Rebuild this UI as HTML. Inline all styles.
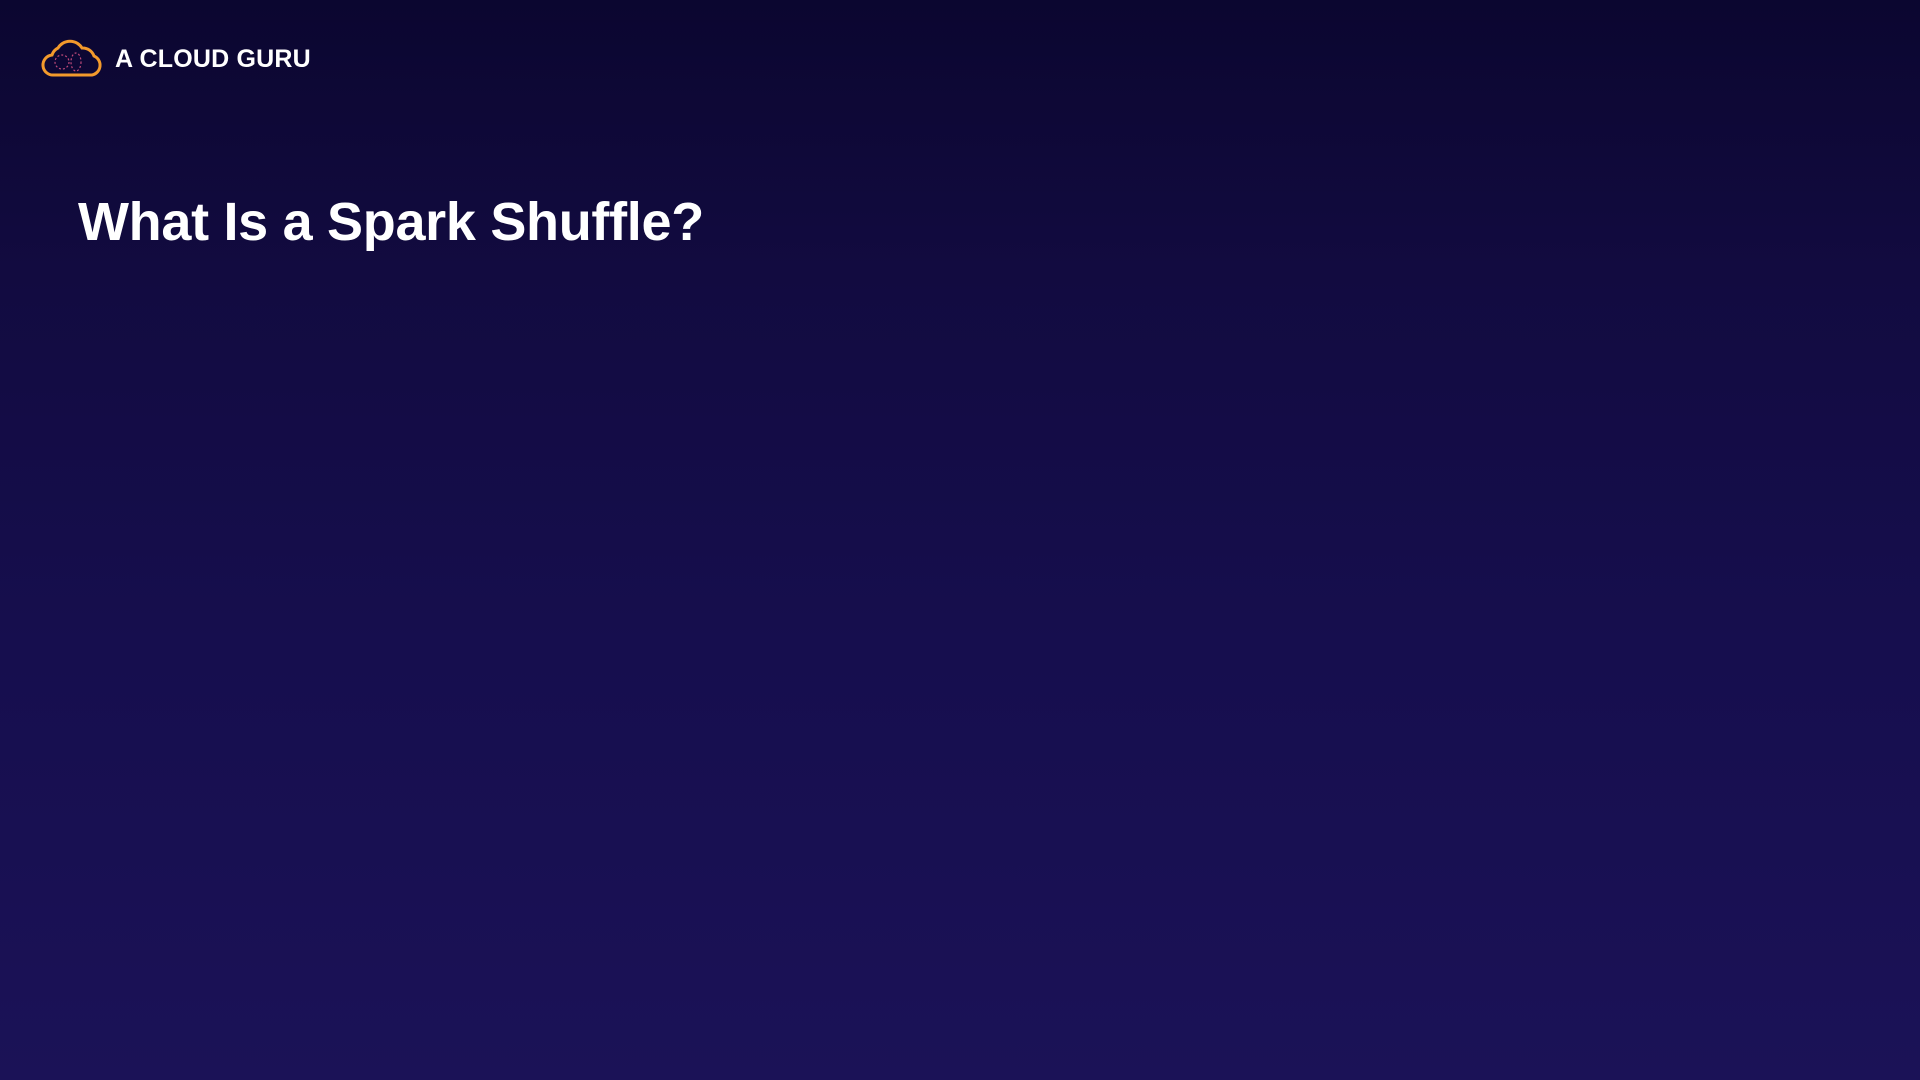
<!DOCTYPE html>
<html><head><style>
html,body{margin:0;padding:0}
body{width:1920px;height:1080px;overflow:hidden;background:linear-gradient(180deg,#0b0630 0%,#120b40 25%,#160e4e 60%,#1b1257 100%);font-family:"Liberation Sans",sans-serif;position:relative}
.logo{position:absolute;left:40px;top:38px}
.brand{position:absolute;left:115px;top:45px;color:#fff;font-weight:bold;font-size:25px;letter-spacing:0.2px}
h1{position:absolute;left:78px;top:188px;margin:0;color:#fff;font-size:54px;font-weight:bold;line-height:68px;letter-spacing:-0.3px}
</style></head><body>
<svg class="logo" width="64" height="40" viewBox="0 0 64 40">
<path d="M14 37 H52 A10 10 0 0 0 54 18 A12 12 0 0 0 42 10 A14 14 0 0 0 18 10 A12 12 0 0 0 12 17 A10 10 0 0 0 14 37 Z" fill="none" stroke="#f39a2c" stroke-width="3"/>
<circle cx="22" cy="24" r="7" fill="none" stroke="#c04a7a" stroke-width="1.2" stroke-dasharray="2 2"/>
<ellipse cx="36" cy="24" rx="5" ry="9" fill="none" stroke="#c04a7a" stroke-width="1.2" stroke-dasharray="2 2"/>
</svg>
<div class="brand">A CLOUD GURU</div>
<h1>What Is a Spark Shuffle?</h1>
</body></html>
